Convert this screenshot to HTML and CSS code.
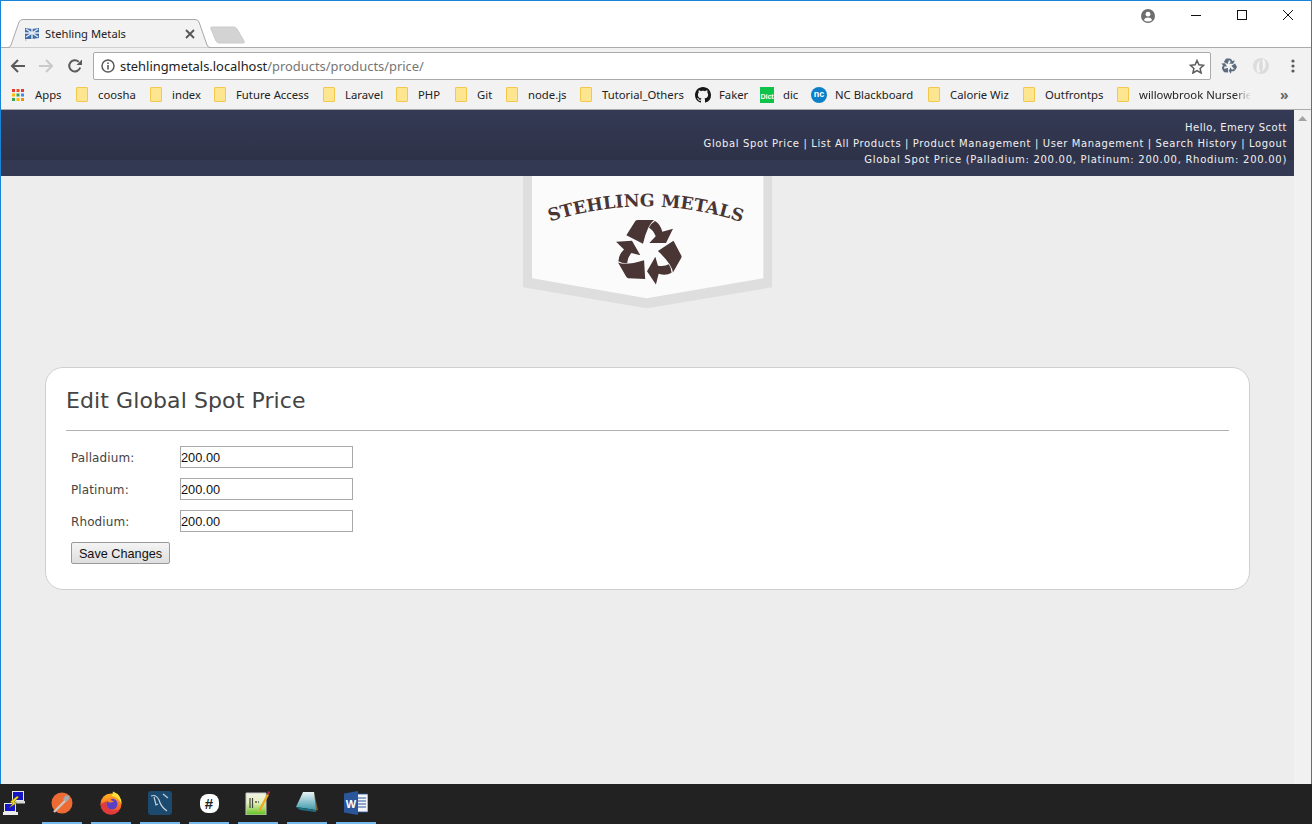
FILE: index.html
```html
<!DOCTYPE html>
<html lang="en">
<head>
<meta charset="utf-8">
<title>Stehling Metals</title>
<link rel="stylesheet" href="styles.css">
</head>
<body>
<div class="window">
  <div class="tabstrip">
    <div class="tab">
      <svg class="tab-shape" width="206" height="29" viewBox="0 0 206 29"><path d="M0 28.5 L2 28.5 Q4 28.5 5 26 L13 3 Q14 .5 17 .5 L189 .5 Q192 .5 193 3 L201 26 Q202 28.5 204 28.5 L206 28.5" fill="#f2f2f2" stroke="#a8a8a8"/></svg>
      <svg class="favicon" width="16" height="14" viewBox="0 0 16 14"><path d="M1 1 L8 2 L15 1 L15 11 L8 12 L1 12Z" fill="#3f6ea8"/><path d="M2 2 L14 10 M14 2 L2 10 M8 2 V12 M1 6 H15" stroke="#e4e9f2" stroke-width="1.4"/><path d="M1 12 L1 14 L3 13" fill="#b9b9b9"/></svg>
      <span class="tab-title">Stehling Metals</span>
      <svg class="tab-close" width="10" height="10" viewBox="0 0 10 10"><path d="M1 1 L9 9 M9 1 L1 9" stroke="#555" stroke-width="1.8"/></svg>
    </div>
    <svg class="newtab" width="35" height="18" viewBox="0 0 35 18"><path d="M2 1 L24 1 Q26 1 27 3 L34 15 Q35 17 33 17 L9 17 Q7 17 6 15 L1 3 Q0 1 2 1Z" fill="#d3d3d3" stroke="#cbcbcb"/></svg>
    <div class="window-controls">
      <svg class="profile" width="14" height="14" viewBox="0 0 14 14"><circle cx="7" cy="7" r="7" fill="#6e6e6e"/><circle cx="7" cy="5.2" r="2.4" fill="#fff"/><path d="M2.8 11 Q4 8.6 7 8.6 Q10 8.6 11.2 11 Q9.5 12.6 7 12.6 Q4.5 12.6 2.8 11Z" fill="#fff"/></svg>
      <svg class="win-btn" width="12" height="12" viewBox="0 0 12 12"><path d="M1 6.5 H11" stroke="#111"/></svg>
      <svg class="win-btn" width="12" height="12" viewBox="0 0 12 12"><rect x="1.5" y="1.5" width="9" height="9" fill="none" stroke="#111"/></svg>
      <svg class="win-btn" width="12" height="12" viewBox="0 0 12 12"><path d="M1 1 L11 11 M11 1 L1 11" stroke="#111"/></svg>
    </div>
  </div>

  <div class="toolbar">
    <svg class="nav-icon" width="16" height="16" viewBox="0 0 16 16"><path d="M15 8 H2.5 M8 2 L2 8 L8 14" fill="none" stroke="#5a5a5a" stroke-width="2"/></svg>
    <svg class="nav-icon" width="16" height="16" viewBox="0 0 16 16"><path d="M1 8 H13.5 M8 2 L14 8 L8 14" fill="none" stroke="#c9c9c9" stroke-width="2"/></svg>
    <svg class="nav-icon nav-reload" width="16" height="16" viewBox="0 0 16 16"><path d="M13.2 9.5 A5.6 5.6 0 1 1 11.8 3.9" fill="none" stroke="#5a5a5a" stroke-width="2"/><path d="M9.5 7 L15 7 L15 1.5Z" fill="#5a5a5a"/></svg>
    <div class="omnibox">
      <svg class="info" width="14" height="14" viewBox="0 0 14 14"><circle cx="7" cy="7" r="6" fill="none" stroke="#5a5a5a" stroke-width="1.5"/><path d="M7 6 V10.5 M7 3.4 V5" stroke="#5a5a5a" stroke-width="1.6"/></svg>
      <span class="url"><span class="host">stehlingmetals.localhost</span>/products/products/price/</span>
      <svg class="star" width="16" height="15" viewBox="0 0 16 15"><path d="M8 1.5 L9.9 5.8 L14.6 6.3 L11.1 9.4 L12.1 14 L8 11.6 L3.9 14 L4.9 9.4 L1.4 6.3 L6.1 5.8Z" fill="none" stroke="#5a5a5a" stroke-width="1.5"/></svg>
    </div>
    <svg class="ext-recycle" width="16" height="16" viewBox="15 15 200 192"><g fill="#5b6b80"><path id="tb-arm" d="M50 60 L76 19 Q78 16 84 16 L132 16 Q112 30 98 85Z M135 19 Q150 28 156 50 L188 41 L168 83 L117 83 L137 63 Q130 45 116 37 Q124 24 135 19Z"/><use href="#tb-arm" transform="rotate(120 115 110)"/><use href="#tb-arm" transform="rotate(240 115 110)"/></g></svg>
    <svg class="ext-swirl" width="18" height="18" viewBox="0 0 18 18"><circle cx="9" cy="9" r="8" fill="#dcdcdc"/><path d="M6 16 Q2 9 8 3 Q6 9 8 15Z M12 2 Q16 9 10 15 Q12 9 10 3Z" fill="#f5f5f5"/></svg>
    <svg class="menu-dots" width="4" height="14" viewBox="0 0 4 14"><circle cx="2" cy="2" r="1.6" fill="#5a5a5a"/><circle cx="2" cy="7" r="1.6" fill="#5a5a5a"/><circle cx="2" cy="12" r="1.6" fill="#5a5a5a"/></svg>
  </div>

  <div class="bookmarks">
    <svg class="bm-apps" width="12" height="12" viewBox="0 0 12 12"><rect width="3" height="3" fill="#e53935"/><rect x="4.5" width="3" height="3" fill="#f4511e"/><rect x="9" width="3" height="3" fill="#e53935"/><rect y="4.5" width="3" height="3" fill="#fbbc05"/><rect x="4.5" y="4.5" width="3" height="3" fill="#34a853"/><rect x="9" y="4.5" width="3" height="3" fill="#4285f4"/><rect y="9" width="3" height="3" fill="#34a853"/><rect x="4.5" y="9" width="3" height="3" fill="#fbbc05"/><rect x="9" y="9" width="3" height="3" fill="#fb8c00"/></svg>
    <span class="bm bm-w27">Apps</span>
    <i class="folder"></i><span class="bm bm-w38">coosha</span>
    <i class="folder"></i><span class="bm bm-w28">index</span>
    <i class="folder"></i><span class="bm bm-w73">Future Access</span>
    <i class="folder"></i><span class="bm bm-w37">Laravel</span>
    <i class="folder"></i><span class="bm bm-w23">PHP</span>
    <i class="folder"></i><span class="bm bm-w15">Git</span>
    <i class="folder"></i><span class="bm bm-w38">node.js</span>
    <i class="folder"></i><span class="bm bm-w81 bm-before-icon">Tutorial_Others</span>
    <svg class="bm-github" width="16" height="16" viewBox="0 0 16 16"><path fill="#181717" d="M8 0C3.58 0 0 3.58 0 8c0 3.54 2.29 6.53 5.47 7.59.4.07.55-.17.55-.38 0-.19-.01-.82-.01-1.49-2.01.37-2.53-.49-2.69-.94-.09-.23-.48-.94-.82-1.13-.28-.15-.68-.52-.01-.53.63-.01 1.08.58 1.23.82.72 1.21 1.87.87 2.33.66.07-.52.28-.87.51-1.07-1.78-.2-3.64-.89-3.64-3.95 0-.87.31-1.59.82-2.15-.08-.2-.36-1.02.08-2.12 0 0 .67-.21 2.2.82.64-.18 1.32-.27 2-.27s1.36.09 2 .27c1.53-1.04 2.2-.82 2.2-.82.44 1.1.16 1.92.08 2.12.51.56.82 1.27.82 2.15 0 3.07-1.87 3.75-3.65 3.95.29.25.54.73.54 1.48 0 1.07-.01 1.93-.01 2.2 0 .21.15.46.55.38A8.01 8.01 0 0 0 16 8c0-4.42-3.58-8-8-8z"/></svg>
    <span class="bm bm-w28 bm-after-icon bm-before-dict">Faker</span>
    <span class="bm-dict">Dict</span>
    <span class="bm bm-w16 bm-after-dict bm-before-nc">dic</span>
    <span class="bm-nc">nc</span>
    <span class="bm bm-w79 bm-after-icon">NC Blackboard</span>
    <i class="folder"></i><span class="bm bm-w59">Calorie Wiz</span>
    <i class="folder"></i><span class="bm bm-w58">Outfrontps</span>
    <i class="folder"></i><span class="bm bm-fade">willowbrook Nurserie</span>
    <span class="bm-more">»</span>
  </div>

  <div class="viewport">
    <div class="page">
      <header class="site-header">
        <p>Hello, Emery Scott</p>
        <p class="nav-line">Global Spot Price | List All Products | Product Management | User Management | Search History | Logout</p>
        <p class="spot">Global Spot Price (Palladium: 200.00, Platinum: 200.00, Rhodium: 200.00)</p>
      </header>
      <svg class="logo" width="249" height="132" viewBox="0 0 747 396">
        <path d="M0 0 V334 L371 397 L747 334 V0Z" fill="#dedede"/>
        <path d="M27 0 V307 L371 367 L721 307 V0Z" fill="#fbfbfb"/>
        <defs><path id="arc" d="M81 137 Q371 44 661 140"/></defs>
        <text class="logo-text"><textPath href="#arc" textLength="585" lengthAdjust="spacing">STEHLING METALS</textPath></text>
        <g transform="translate(261 117)" fill="#4a3535">
          <path id="arm" d="M49 61 L76 18 Q78 15 84 15 L132 15 Q112 30 99 86Z M135 18 Q151 27 157 50 L189 41 L168 84 L118 84 L137 64 Q130 45 117 38 Q124 24 135 18Z"/>
          <use href="#arm" transform="rotate(120 115 110)"/>
          <use href="#arm" transform="rotate(240 115 110)"/>
        </g>
      </svg>
      <section class="card">
        <h1>Edit Global Spot Price</h1>
        <form class="price-form">
          <div class="row"><label for="pd">Palladium:</label><input id="pd" type="text" value="200.00"></div>
          <div class="row"><label for="pt">Platinum:</label><input id="pt" type="text" value="200.00"></div>
          <div class="row"><label for="rh">Rhodium:</label><input id="rh" type="text" value="200.00"></div>
          <button type="button">Save Changes</button>
        </form>
      </section>
    </div>
    <div class="scrollbar"><svg width="9" height="5" viewBox="0 0 9 5"><path d="M4.5 0 L9 5 H0Z" fill="#a3a3a3"/></svg></div>
  </div>
</div>

<footer class="taskbar">
  <div class="tray-net">
    <svg width="24" height="26" viewBox="0 0 24 26">
      <rect x="10.500" y=".5" width="11" height="9" fill="#1616c8" stroke="#e8e8e8"/><path d="M9 10 H23 V12.500 H9Z" fill="#d8d8d8"/>
      <rect x="2.500" y="12.500" width="11" height="8" fill="#1616c8" stroke="#e8e8e8"/><path d="M1 21 H16 V24 H1Z" fill="#ececec"/>
      <path d="M15 5 L8 11 L11 12 L7 17 L15 12 L12 11 L17 6Z" fill="#f5d51c" stroke="#3a3a10" stroke-width=".4"/>
    </svg>
  </div>
  <div class="task"><svg width="22" height="22" viewBox="0 0 22 22"><circle cx="11" cy="11" r="10.500" fill="#ee6a33"/><path d="M3 20 L15 8" stroke="#cfc6c0" stroke-width="2.400"/><path d="M12 7 L14 4 Q16 2.500 18 4 Q19 6 17.500 8 L15 10Z" fill="#a9a9a9"/></svg></div>
  <div class="task"><svg width="24" height="24" viewBox="0 0 24 24"><defs><linearGradient id="fx" x1="0" y1="0" x2="0" y2="1"><stop offset="0" stop-color="#ffb520"/><stop offset="1" stop-color="#f0402a"/></linearGradient></defs><circle cx="12" cy="13" r="10.500" fill="url(#fx)"/><path d="M14 .5 Q23 4 22.500 13 Q19 6 13 5Z" fill="#ffdf3a"/><path d="M1.500 13 A10.500 10.500 0 0 0 12 23.500 Q18 23 21 18 Q14 21 10 18 Q6 14 8 10Z" fill="#e23a3a"/><circle cx="13" cy="13" r="5.500" fill="#5b3fc4"/><path d="M7.500 9 Q11 5 16 7 Q12.500 7 11.500 9 L15 10.500 Q11 12.500 8.500 10.500Z" fill="#ff8a1f"/></svg></div>
  <div class="task"><svg width="24" height="24" viewBox="0 0 24 24"><rect width="24" height="24" rx="3" fill="#1c4a6e"/><path d="M3 5 Q8 3 11 9 Q13 16 19 20 M6 6 L8 14 L10 13 M15 3 L20 7" fill="none" stroke="#c3d2de" stroke-width="1.200"/></svg></div>
  <div class="task"><span class="slack">#</span></div>
  <div class="task"><svg width="26" height="24" viewBox="0 0 26 24"><defs><linearGradient id="npp" x1="0" y1="0" x2="0" y2="1"><stop offset="0" stop-color="#f4f4e8"/><stop offset=".45" stop-color="#e4f0b4"/><stop offset="1" stop-color="#5fc01f"/></linearGradient></defs><path d="M1 2 H21 V24 H1Z" fill="url(#npp)" stroke="#c4c4c4"/><path d="M5 7 V17 M7.500 7 V17" stroke="#444" stroke-width="1.200"/><path d="M10 11 H14" stroke="#555" stroke-width="1.400" stroke-dasharray="2 1"/><path d="M22 3 L14 18 L13 21 L16 19 L24 4Z" fill="#eda81f"/><path d="M22 3 L24 4 L25 1 L23 0Z" fill="#b3303a"/></svg></div>
  <div class="task"><svg width="24" height="24" viewBox="0 0 24 24"><defs><linearGradient id="pad" x1="0" y1="0" x2="0" y2="1"><stop offset="0" stop-color="#e8f3f6"/><stop offset="1" stop-color="#3f9aac"/></linearGradient></defs><path d="M19 1 L23 19 L18 21Z" fill="#7a6238"/><path d="M8 1 L19 1 L21 19 L1 16Z" fill="url(#pad)"/><path d="M1 16 L21 19 L21 21 L5 19Z" fill="#1f6d80"/></svg></div>
  <div class="task"><svg width="24" height="24" viewBox="0 0 24 24"><rect x="11" y="3" width="13" height="18" fill="#f4f6fa" stroke="#2b579a" stroke-width=".8"/><path d="M14 7 H22 M14 10 H22 M14 13 H22 M14 16 H22" stroke="#2b579a"/><path d="M0 2.500 L14 0 V24 L0 21.500Z" fill="#2b579a"/><text class="word-w" x="7" y="16.500">W</text></svg></div>
</footer>
</body>
</html>
```
FILE: styles.css
```css
* { box-sizing: border-box; }
html, body { margin: 0; height: 824px; overflow: hidden; }
body { font-family: "DejaVu Sans", Verdana, sans-serif; background: #222; }
svg { display: block; flex: none; }
p { margin: 0; }

.window {
  height: 784px;
  display: flex;
  flex-direction: column;
  background: #fff;
  border: 1px solid #1883d7;
  border-bottom: 0;
}

/* tab strip */
.tabstrip {
  height: 47px;
  flex: none;
  display: flex;
  align-items: flex-end;
  padding-left: 5px;
  border-bottom: 1px solid #ababab;
}
.tab {
  position: relative;
  width: 206px;
  height: 29px;
  margin-bottom: -1px;
  display: flex;
  align-items: center;
  padding: 0 17px 0 18px;
  font: 11.2px "Noto Sans", sans-serif;
  color: #222;
}
.tab-shape { position: absolute; left: 0; top: 0; }
.favicon, .tab-title, .tab-close { position: relative; }
.tab-title { margin-left: 5px; flex: 1; }
.newtab { margin: 0 0 3px -2px; }
.window-controls {
  margin-left: auto;
  align-self: flex-start;
  display: flex;
  padding: 8px 17px 0 0;
}
.profile { margin-right: 35px; }
.win-btn { margin-left: 34px; }
.profile + .win-btn { margin-left: 0; }

/* toolbar */
.toolbar {
  height: 32px;
  flex: none;
  display: flex;
  align-items: center;
  padding: 4px 17px 0 9px;
  background: #f2f2f2;
}
.nav-icon { margin-right: 12px; }
.nav-reload { margin: 0 11px 0 1px; }
.omnibox {
  width: 1118px;
  height: 28px;
  flex: none;
  margin-left: -1px;
  display: flex;
  align-items: center;
  padding: 0 5px 0 7px;
  background: #fff;
  border: 1px solid #a9a9a9;
  border-radius: 2px;
}
.url { margin-left: 5px; flex: 1; font: 12.9px "Noto Sans", sans-serif; color: #757575; white-space: nowrap; }
.host { color: #222; }
.ext-recycle { margin-left: 10px; }
.ext-swirl { margin-left: 15px; }
.menu-dots { margin-left: 21px; }

/* bookmarks */
.bookmarks {
  height: 30px;
  flex: none;
  display: flex;
  align-items: center;
  padding-left: 11px;
  background: #f2f2f2;
  border-bottom: 1px solid #ababab;
  font: 11.3px "Noto Sans", sans-serif;
  color: #222;
  white-space: nowrap;
}
.bm { margin: 0 14px 0 10px; }
.bm-w15 { width: 15px; }
.bm-w16 { width: 16px; }
.bm-w23 { width: 23px; }
.bm-w27 { width: 27px; margin-left: 11px; }
.bm-w28 { width: 28px; }
.bm-w37 { width: 37px; }
.bm-w38 { width: 38px; }
.bm-w58 { width: 58px; }
.bm-w59 { width: 59px; }
.bm-w73 { width: 73px; }
.bm-w79 { width: 79px; }
.bm-w81 { width: 81px; }
.bm-before-icon { margin-right: 12px; }
.bm-after-icon { margin-left: 8px; }
.bm-before-dict { margin-right: 13px; }
.bm-after-dict { margin-left: 9px; }
.bm-before-nc { margin-right: 12px; }
.bm-fade {
  width: 112px;
  -webkit-mask-image: linear-gradient(to right, #000 85%, transparent);
  mask-image: linear-gradient(to right, #000 85%, transparent);
}
.folder {
  width: 12px;
  height: 15px;
  flex: none;
  background: #fee691;
  border: 1px solid #f2c94c;
  border-radius: 1px;
}
.bm-dict {
  width: 14px;
  height: 16px;
  flex: none;
  padding-top: 6px;
  background: #0fc24a;
  color: #fff;
  font: bold 7px/8px "Liberation Sans", sans-serif;
  text-align: center;
}
.bm-nc {
  width: 16px;
  height: 16px;
  flex: none;
  border-radius: 50%;
  background: #0b7fc7;
  color: #fff;
  font: bold 9px/15px "Liberation Sans", sans-serif;
  text-align: center;
}
.bm-more { margin-left: 15px; font-size: 14px; font-weight: bold; color: #666; }

/* page */
.viewport { flex: 1; min-height: 0; display: flex; }
.page { flex: 1; min-width: 0; background: #ededed; }
.scrollbar { width: 17px; flex: none; background: #f1f1f1; padding: 6px 4px 0; }

.site-header {
  height: 66px;
  padding: 10px 7px 0 0;
  background: linear-gradient(#343a55 0, #2e3248 76%, #333853 76%, #333853 100%);
  color: #f0f0f0;
  font-size: 10px;
  line-height: 16px;
  letter-spacing: .5px;
  text-align: right;
}
.nav-line { letter-spacing: .625px; }
.spot { letter-spacing: .72px; }
.logo { margin: 0 auto; }
.logo-text {
  font-family: "DejaVu Serif", serif;
  font-weight: bold;
  font-size: 52px;
  fill: #4a3535;
}
.card {
  height: 223px;
  margin: 59px 44px 0;
  padding: 20px;
  background: #fff;
  border: 1px solid #cfcfcf;
  border-radius: 18px;
}
.card h1 {
  margin: 0;
  height: 43px;
  padding-top: 1px;
  border-bottom: 1px solid #b0b0b0;
  font-size: 22px;
  font-weight: normal;
  line-height: 24px;
  letter-spacing: .1px;
  color: #444;
}
.price-form { padding: 15px 0 0 5px; }
.row { display: flex; align-items: center; height: 22px; margin-bottom: 10px; }
label { width: 109px; padding-top: 2px; font-size: 12px; letter-spacing: .1px; color: #444; }
input {
  width: 173px;
  height: 22px;
  padding: 0;
  border: 1px solid #a9a9a9;
  background: #fff;
  font: 12.8px "Liberation Sans", sans-serif;
  color: #111;
}
button {
  display: block;
  width: 99px;
  height: 22px;
  padding: 1px 0 0;
  border: 1px solid #9a9a9a;
  border-radius: 2px;
  background: linear-gradient(#f4f4f4, #dedede);
  font: 12.7px "Liberation Sans", sans-serif;
  color: #111;
}

/* taskbar */
.taskbar {
  height: 40px;
  display: flex;
  padding-left: 2px;
  background: #222;
}
.tray-net { width: 40px; padding-top: 7px; }
.task {
  width: 40px;
  height: 40px;
  margin-right: 9px;
  display: flex;
  align-items: center;
  justify-content: center;
  border-bottom: 2px solid #76b9ed;
}
.slack {
  width: 19px;
  height: 19px;
  border-radius: 8px;
  background: #fff;
  color: #222;
  font: bold 15px/19px "Liberation Sans", sans-serif;
  text-align: center;
}
.word-w { font: bold 11px "Liberation Sans", sans-serif; fill: #fff; text-anchor: middle; }
```
